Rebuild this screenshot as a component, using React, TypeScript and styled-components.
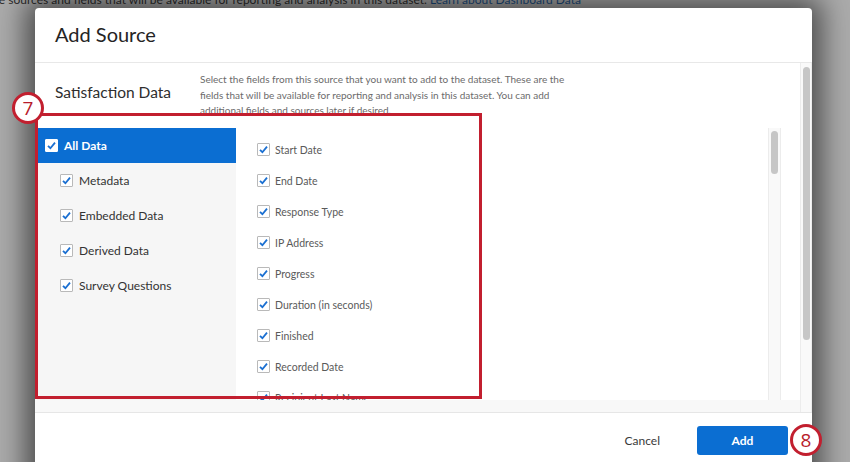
import styled, { createGlobalStyle } from "styled-components";

const GlobalStyle = createGlobalStyle`
  html, body {
    margin: 0;
    padding: 0;
  }
  body {
    background: #ababab;
    font-family: Lato, "Open Sans", sans-serif;
  }
`;

const Page = styled.div`
  position: relative;
  width: 850px;
  height: 462px;
  overflow: hidden;
  background: #ababab;
`;

const BackText = styled.p`
  margin: -8px 0 0 -4px;
  font-size: 12px;
  line-height: 16px;
  color: #2b2b2b;
  white-space: nowrap;
  a {
    color: #1d4f82;
    text-decoration: none;
  }
`;

// the dialog lies over the page
const Modal = styled.div`
  position: absolute;
  left: 35px;
  top: 8px;
  width: 777px;
  height: 480px;
  background: #fff;
  border-radius: 4px;
  box-shadow: 0 0 28px 10px rgba(0, 0, 0, 0.55);
  display: flex;
  flex-direction: column;
  overflow: hidden;
`;

const Header = styled.div`
  height: 54px;
  padding: 0 20px;
  display: flex;
  align-items: center;
  border-bottom: 1px solid #e8e8e8;
  flex-shrink: 0;
`;

const Title = styled.h1`
  margin: -3px 0 0;
  font-size: 20px;
  font-weight: 400;
  color: #242424;
`;

const Body = styled.div`
  display: flex;
  height: 349px;
  flex-shrink: 0;
  border-bottom: 1px solid #e6e6e6;
`;

const Scroll = styled.div`
  flex: 1;
  display: flex;
  flex-direction: column;
  min-width: 0;
`;

const Intro = styled.div`
  height: 65px;
  padding: 9px 0 0 20px;
  box-sizing: border-box;
  display: flex;
  overflow: hidden;
`;

const SourceName = styled.h2`
  margin: 10px 0 0;
  width: 145px;
  flex-shrink: 0;
  font-size: 15.5px;
  line-height: 20px;
  font-weight: 400;
  color: #2e2e2e;
`;

const Description = styled.p`
  margin: 0;
  width: 388px;
  font-size: 10px;
  line-height: 15.5px;
  color: #6b6b6b;
`;

const Panel = styled.div`
  height: 272px;
  margin: 0 19px 0 2px;
  display: flex;
`;

const SideList = styled.div`
  width: 199px;
  background: #f6f6f6;
  flex-shrink: 0;
`;

const SideRow = styled.div<{ $selected?: boolean }>`
  height: 35px;
  display: flex;
  align-items: center;
  gap: 6px;
  padding-left: ${(p) => (p.$selected ? "8px" : "23px")};
  background: ${(p) => (p.$selected ? "#0b6ed2" : "transparent")};
  color: ${(p) => (p.$selected ? "#fff" : "#333")};
  font-size: 12px;
  font-weight: ${(p) => (p.$selected ? 700 : 400)};
`;

const FieldList = styled.div`
  flex: 1;
  padding: 6px 0 0 21px;
  overflow: hidden;
  background: #fff;
`;

const FieldRow = styled.div`
  height: 31px;
  display: flex;
  align-items: center;
  gap: 5px;
  font-size: 10.5px;
  color: #5a5a5a;
`;

const Track = styled.div<{ $outer?: boolean }>`
  width: ${(p) => (p.$outer ? "12px" : "13px")};
  flex-shrink: 0;
  background: #f9f9f9;
  border-left: 1px solid #ececec;
  border-right: 1px solid #ececec;
  box-sizing: border-box;
  padding: ${(p) => (p.$outer ? "4px 1px 0 2px" : "3px 2px 0 2px")};
`;

const Thumb = styled.div<{ $h: number }>`
  height: ${(p) => p.$h}px;
  border-radius: 4px;
  background: #c6c6c6;
`;

const Strip = styled.div`
  height: 12px;
  background: #f8f8f8;
`;

const Box = styled.span<{ $onBlue?: boolean }>`
  width: 13px;
  height: 13px;
  box-sizing: border-box;
  flex-shrink: 0;
  border: 1px solid ${(p) => (p.$onBlue ? "#fff" : "#b9b9b9")};
  border-radius: 1px;
  background: #fff;
  display: flex;
  align-items: center;
  justify-content: center;
`;

const Footer = styled.div`
  display: flex;
  justify-content: flex-end;
  align-items: flex-start;
  gap: 37px;
  padding: 13px 24px 0 0;
`;

const Cancel = styled.button`
  border: none;
  background: none;
  padding: 0;
  font-family: inherit;
  font-size: 12px;
  line-height: 29px;
  color: #3a3a3a;
`;

const AddButton = styled.button`
  width: 91px;
  height: 29px;
  border: none;
  border-radius: 3px;
  background: #0b6ed2;
  color: #fff;
  font-family: inherit;
  font-size: 12px;
  font-weight: 700;
`;

// annotation overlays
const Highlight = styled.div`
  position: absolute;
  left: 35px;
  top: 113px;
  width: 447px;
  height: 286px;
  box-sizing: border-box;
  border: 3px solid #c21f2f;
`;

const Badge = styled.div<{ $x: number; $y: number }>`
  position: absolute;
  left: ${(p) => p.$x - 16}px;
  top: ${(p) => p.$y - 16}px;
  width: 32px;
  height: 32px;
  box-sizing: border-box;
  border: 3px solid #c21f2f;
  border-radius: 50%;
  background: #fff;
  display: flex;
  align-items: center;
  justify-content: center;
  font-size: 19px;
  color: #b81d2c;
  font-family: "Open Sans", sans-serif;
`;

function Check({ onBlue }: { onBlue?: boolean }) {
  return (
    <Box $onBlue={onBlue}>
      <svg width="11" height="11" viewBox="0 0 11 11">
        <path d="M2 5.8 L4.4 8.2 L9 2.6" fill="none" stroke="#1a6fd1" strokeWidth="1.8" />
      </svg>
    </Box>
  );
}

const groups = ["Metadata", "Embedded Data", "Derived Data", "Survey Questions"];
const fields = [
  "Start Date",
  "End Date",
  "Response Type",
  "IP Address",
  "Progress",
  "Duration (in seconds)",
  "Finished",
  "Recorded Date",
  "Recipient Last Name",
];

export default function App() {
  return (
    <Page>
      <GlobalStyle />
      <BackText>
        le sources and fields that will be available for reporting and analysis in this dataset.{" "}
        <a>Learn about Dashboard Data</a>
      </BackText>
      <Modal>
        <Header>
          <Title>Add Source</Title>
        </Header>
        <Body>
          <Scroll>
            <Intro>
              <SourceName>Satisfaction Data</SourceName>
              <Description>
                Select the fields from this source that you want to add to the dataset. These are the
                fields that will be available for reporting and analysis in this dataset. You can add
                additional fields and sources later if desired.
              </Description>
            </Intro>
            <Panel>
              <SideList>
                <SideRow $selected>
                  <Check onBlue />
                  All Data
                </SideRow>
                {groups.map((g) => (
                  <SideRow key={g}>
                    <Check />
                    {g}
                  </SideRow>
                ))}
              </SideList>
              <FieldList>
                {fields.map((f) => (
                  <FieldRow key={f}>
                    <Check />
                    {f}
                  </FieldRow>
                ))}
              </FieldList>
              <Track>
                <Thumb $h={43} />
              </Track>
            </Panel>
            <Strip />
          </Scroll>
          <Track $outer>
            <Thumb $h={273} />
          </Track>
        </Body>
        <Footer>
          <Cancel>Cancel</Cancel>
          <AddButton>Add</AddButton>
        </Footer>
      </Modal>
      <Highlight />
      <Badge $x={28} $y={108}>7</Badge>
      <Badge $x={806} $y={440}>8</Badge>
    </Page>
  );
}
